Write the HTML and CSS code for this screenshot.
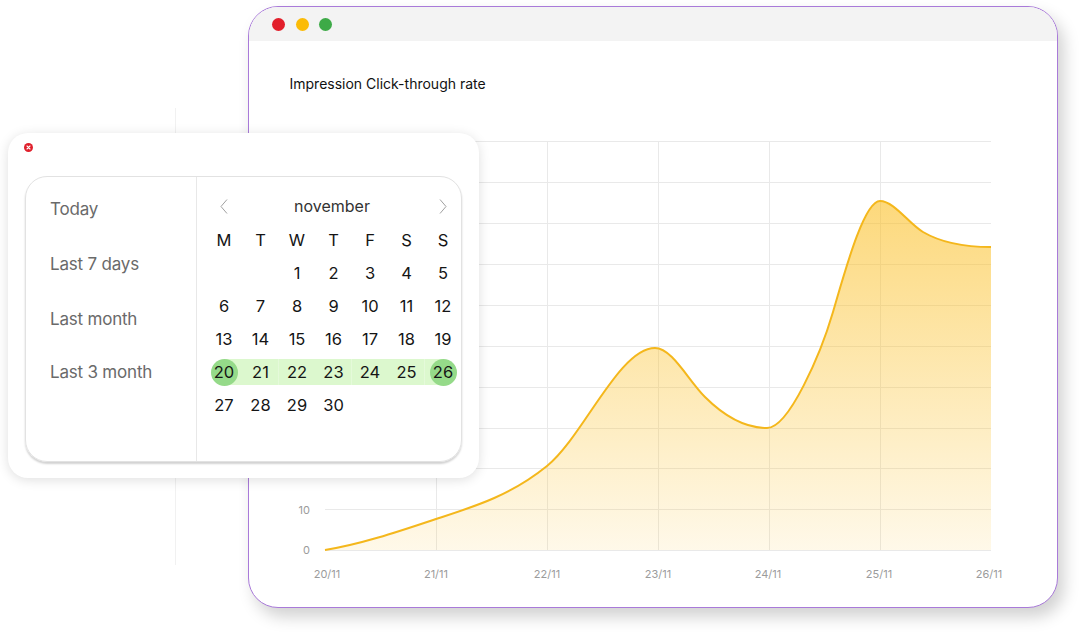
FILE: index.html
```html
<!DOCTYPE html>
<html lang="en">
<head>
    <meta charset="UTF-8">
    <title>Impression Click-through rate</title>
    <link rel="stylesheet" href="styles.css">
</head>
<body>
    <div class="stage">
        <div class="guide"></div>

        <!-- chart window -->
        <section class="window">
            <header class="titlebar">
                <span class="dot dot-red"></span>
                <span class="dot dot-yellow"></span>
                <span class="dot dot-green"></span>
            </header>
            <h2 class="chart-title">Impression Click-through rate</h2>
            <svg class="chart" width="730" height="490" viewBox="280 100 730 490">
                <defs>
                    <linearGradient id="area" x1="0" y1="0" x2="0" y2="1">
                        <stop offset="0" stop-color="#fbbf24" stop-opacity="0.6" />
                        <stop offset="1" stop-color="#fbbf24" stop-opacity="0.1" />
                    </linearGradient>
                </defs>
                <g class="grid">
                    <line x1="325" y1="142.5" x2="991" y2="142.5" />
                    <line x1="325" y1="183.5" x2="991" y2="183.5" />
                    <line x1="325" y1="224.5" x2="991" y2="224.5" />
                    <line x1="325" y1="265.5" x2="991" y2="265.5" />
                    <line x1="325" y1="306.5" x2="991" y2="306.5" />
                    <line x1="325" y1="347.5" x2="991" y2="347.5" />
                    <line x1="325" y1="388.5" x2="991" y2="388.5" />
                    <line x1="325" y1="429.5" x2="991" y2="429.5" />
                    <line x1="325" y1="469.5" x2="991" y2="469.5" />
                    <line x1="325" y1="510.5" x2="991" y2="510.5" />
                    <line x1="325" y1="551.5" x2="991" y2="551.5" />
                    <line x1="436.5" y1="142" x2="436.5" y2="551" />
                    <line x1="547.5" y1="142" x2="547.5" y2="551" />
                    <line x1="658.5" y1="142" x2="658.5" y2="551" />
                    <line x1="769.5" y1="142" x2="769.5" y2="551" />
                    <line x1="880.5" y1="142" x2="880.5" y2="551" />
                </g>
                <path class="area" d="M325,551 C362,545 400,532 436,520 C473,508 510,497 547,467 C583,438 619,349 655,349 C672,349 688,381 705,398 C725,418 747,429 767,429 C789,429 821,354 833,313 C845,272 864,202 880,202 C894,202 909,225 923,233 C940,243 965,248 991,248 L991,551 Z" />
                <path class="line" d="M325,551 C362,545 400,532 436,520 C473,508 510,497 547,467 C583,438 619,349 655,349 C672,349 688,381 705,398 C725,418 747,429 767,429 C789,429 821,354 833,313 C845,272 864,202 880,202 C894,202 909,225 923,233 C940,243 965,248 991,248" />
                <g class="y-labels">
                    <text x="310" y="515">10</text>
                    <text x="310" y="555">0</text>
                </g>
                <g class="x-labels">
                    <text x="327" y="579">20/11</text>
                    <text x="436" y="579">21/11</text>
                    <text x="547" y="579">22/11</text>
                    <text x="658" y="579">23/11</text>
                    <text x="768" y="579">24/11</text>
                    <text x="879" y="579">25/11</text>
                    <text x="989" y="579">26/11</text>
                </g>
            </svg>
        </section>

        <!-- date picker popup -->
        <section class="picker">
            <div class="picker-bar">
                <span class="close">
                    <svg width="9" height="9" viewBox="0 0 9 9">
                        <circle cx="4.5" cy="4.5" r="4.5" fill="#e0202c" />
                        <path d="M3 3 L6 6 M6 3 L3 6" stroke="#fff" stroke-width="1.1" stroke-linecap="round" />
                    </svg>
                </span>
            </div>
            <div class="panel">
                <ul class="presets">
                    <li>Today</li>
                    <li>Last 7 days</li>
                    <li>Last month</li>
                    <li>Last 3 month</li>
                </ul>
                <div class="calendar">
                    <div class="cal-nav">
                        <span class="chev">
                            <svg width="8" height="15" viewBox="0 0 8 15"><polyline points="7,0.5 1,7.5 7,14.5" /></svg>
                        </span>
                        <span class="month">november</span>
                        <span class="chev">
                            <svg width="8" height="15" viewBox="0 0 8 15"><polyline points="1,0.5 7,7.5 1,14.5" /></svg>
                        </span>
                    </div>
                    <div class="days">
                        <span class="wd">M</span><span class="wd">T</span><span class="wd">W</span><span class="wd">T</span><span class="wd">F</span><span class="wd">S</span><span class="wd">S</span>

                        <span class="day"></span><span class="day"></span>
                        <span class="day">1</span><span class="day">2</span><span class="day">3</span><span class="day">4</span><span class="day">5</span>

                        <span class="day">6</span><span class="day">7</span><span class="day">8</span><span class="day">9</span><span class="day">10</span><span class="day">11</span><span class="day">12</span>

                        <span class="day">13</span><span class="day">14</span><span class="day">15</span><span class="day">16</span><span class="day">17</span><span class="day">18</span><span class="day">19</span>

                        <span class="day range range-start"><span class="pick">20</span></span>
                        <span class="day range">21</span>
                        <span class="day range">22</span>
                        <span class="day range">23</span>
                        <span class="day range">24</span>
                        <span class="day range">25</span>
                        <span class="day range range-end"><span class="pick">26</span></span>

                        <span class="day">27</span><span class="day">28</span><span class="day">29</span><span class="day">30</span>
                    </div>
                </div>
            </div>
        </section>
    </div>
</body>
</html>
```

FILE: styles.css
```css
/* page */
* {
    box-sizing: border-box;
}

body {
    margin: 0;
    background: #fff;
    font-family: Inter, "Noto Sans", sans-serif;
    color: #111;
}

.stage {
    position: relative;
    width: 1080px;
    height: 633px;
    overflow: hidden;
}

.guide {
    position: absolute;
    left: 175px;
    top: 108px;
    width: 1px;
    height: 457px;
    background: #f1f1f1;
}

/* chart window */
.window {
    position: relative;
    margin: 6px 0 0 248px;
    width: 810px;
    height: 602px;
    background: #fff;
    border: 1.5px solid #a97ad9;
    border-radius: 30px;
    overflow: hidden;
    box-shadow: 6px 9px 16px rgba(0, 0, 0, 0.18);
}

.titlebar {
    display: flex;
    align-items: center;
    gap: 10.5px;
    height: 34px;
    padding-left: 23px;
    background: #f3f3f3;
}

.dot {
    width: 13px;
    height: 13px;
    border-radius: 50%;
}

.dot-red { background: #e21f2b; }
.dot-yellow { background: #fbbb07; }
.dot-green { background: #3daa47; }

.chart-title {
    margin: 33px 0 0 40.5px;
    font-size: 14px;
    line-height: 20px;
    font-weight: 400;
    color: #111;
}

.chart {
    display: block;
    margin: 5px 0 0 30.5px;
}

.chart .grid line {
    stroke: #e9e9e9;
    stroke-width: 1;
}

.chart .area {
    fill: url(#area);
}

.chart .line {
    fill: none;
    stroke: #f4b71c;
    stroke-width: 2;
}

.chart text {
    font-family: Inter, "Noto Sans", sans-serif;
    font-size: 11px;
    fill: #9b9b9b;
}

.chart .y-labels text {
    text-anchor: end;
}

.chart .x-labels text {
    text-anchor: middle;
}

/* date picker */
.picker {
    position: absolute;
    left: 8px;
    top: 133px;
    width: 471px;
    height: 345px;
    padding: 0 17px;
    background: #fff;
    border-radius: 20px;
    box-shadow: 0 2px 12px rgba(0, 0, 0, 0.13);
}

.picker-bar {
    height: 43px;
    padding-top: 9.5px;
}

.close {
    display: block;
    width: 9px;
    height: 9px;
    margin-left: -1.5px;
}

.close svg {
    display: block;
}

.panel {
    display: grid;
    grid-template-columns: 171px 1fr;
    width: 437px;
    height: 286px;
    border: 1px solid #e2e2e2;
    border-radius: 22px;
    box-shadow: 0 2px 2px rgba(0, 0, 0, 0.18);
}

.presets {
    list-style: none;
    margin: 0;
    padding: 20px 0 0 24px;
    border-right: 1px solid #e8e8e8;
    display: flex;
    flex-direction: column;
    gap: 31px;
}

.presets li {
    font-size: 17px;
    line-height: 24px;
    color: #6a6a6a;
    letter-spacing: -0.2px;
}

.presets li:last-child {
    margin-top: -2px;
}

.calendar {
    padding: 16px 0 0 8.75px;
}

.cal-nav {
    display: flex;
    align-items: center;
    justify-content: space-between;
    width: 255.5px;
    height: 26px;
    margin-bottom: 4.5px;
}

.chev {
    display: flex;
    justify-content: center;
    width: 36.5px;
}

.chev svg {
    display: block;
}

.chev polyline {
    fill: none;
    stroke: #a0a0a0;
    stroke-width: 1;
}

.month {
    font-size: 16px;
    color: #333;
    margin-left: -3px;
}

.days {
    display: grid;
    grid-template-columns: repeat(7, 36.5px);
    grid-auto-rows: 33px;
}

.wd,
.day {
    display: flex;
    align-items: center;
    justify-content: center;
    font-size: 16.5px;
    color: #151515;
}

.range {
    background-image: linear-gradient(#dcf8ce, #dcf8ce);
    background-size: 100% 26px;
    background-position: center;
    background-repeat: no-repeat;
}

.range-start {
    background-size: 50% 26px;
    background-position: right center;
}

.range-end {
    background-size: 50% 26px;
    background-position: left center;
}

.pick {
    display: flex;
    align-items: center;
    justify-content: center;
    width: 27px;
    height: 27px;
    border-radius: 50%;
    background: #95da89;
}
```
